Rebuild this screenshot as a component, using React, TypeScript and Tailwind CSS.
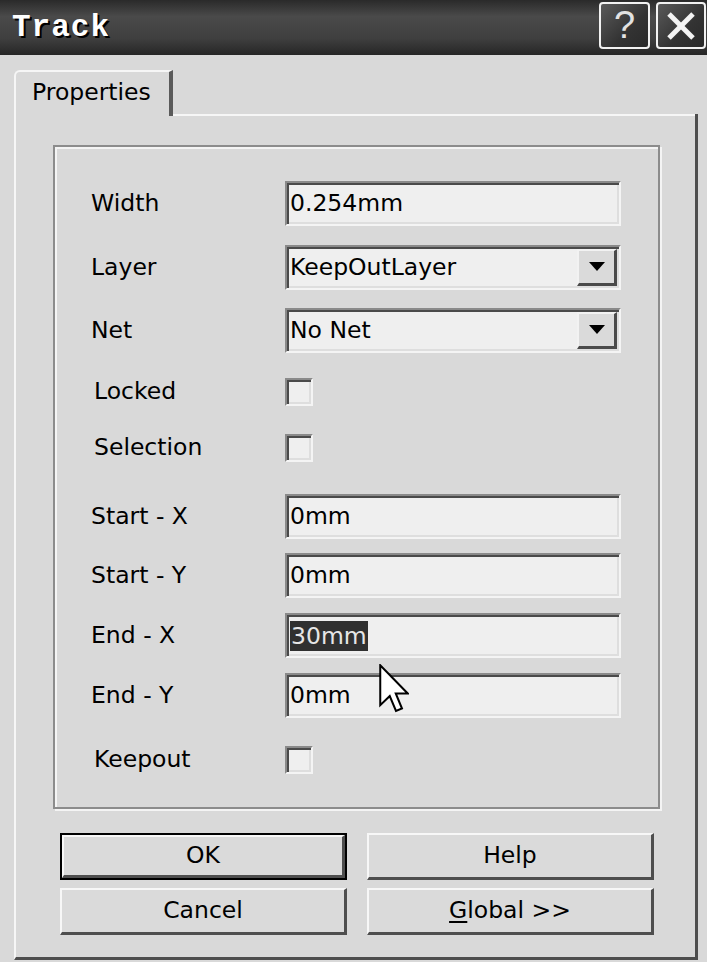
import React from "react";

const sunken =
  "border-2 border-t-[#8a8a8a] border-l-[#8a8a8a] border-b-[#f4f4f4] border-r-[#f4f4f4] shadow-[inset_2px_2px_0_#4a4a4a,inset_-2px_-2px_0_#dedede] bg-[#efefef]";

function Field({ value, combo, selected }: { value: string; combo?: boolean; selected?: boolean }) {
  return (
    <div className={`relative h-[45px] w-[336px] ${sunken} flex items-center pl-[3px]`}>
      {selected ? (
        <span className="bg-[#303030] text-[#e6e6e6] px-[1px] leading-[30px]">{value}</span>
      ) : (
        <span className="text-black">{value}</span>
      )}
      {combo && (
        <div className="absolute right-[2px] top-[2px] bottom-[2px] w-[40px] bg-[#dadada] border-t-2 border-l-2 border-t-[#f2f2f2] border-l-[#f2f2f2] border-b-[3px] border-r-[3px] border-b-[#4a4a4a] border-r-[#4a4a4a] flex items-center justify-center">
          <svg width="16" height="10" viewBox="0 0 16 10">
            <polygon points="0,0 16,0 8,9" fill="#000" />
          </svg>
        </div>
      )}
    </div>
  );
}

function Check() {
  return <div className={`h-[28px] w-[28px] ${sunken}`} />;
}

function Row({ label, children, cls, check }: { label: string; children: React.ReactNode; cls: string; check?: boolean }) {
  return (
    <div className={`flex items-center ${check ? "h-[28px]" : "h-[45px]"} ${cls}`}>
      <div className={`w-[194px] leading-none ${check ? "pl-[3px]" : ""}`}>{label}</div>
      {children}
    </div>
  );
}

function Btn({ children, def }: { children: React.ReactNode; def?: boolean }) {
  const inner =
    "h-full w-full bg-[#dadada] border-t-2 border-l-2 border-t-[#f7f7f7] border-l-[#f7f7f7] border-b-[3px] border-r-[3px] border-b-[#4e4e4e] border-r-[#4e4e4e] flex items-center justify-center";
  return (
    <div className={`w-[287px] ${def ? "h-[47px] border-2 border-black" : "h-[47px]"}`}>
      <div className={inner}>{children}</div>
    </div>
  );
}

export default function App() {
  return (
    <div className="relative w-[707px] h-[962px] overflow-hidden bg-[#d9d9d9] text-[23.5px] text-black font-['DejaVu_Sans','Liberation_Sans',sans-serif]">
      {/* Title bar */}
      <div className="h-[55px] flex items-center justify-between bg-[linear-gradient(to_bottom,#2a2a2a,#4a4a4a_30%,#3f3f3f_70%,#262626)]">
        <div className="pl-[12px] pt-[2px] text-[31px] font-bold text-white tracking-[1px] font-['Liberation_Mono',monospace] [text-shadow:2px_2px_0_#000]">
          Track
        </div>
        <div className="flex items-center gap-[6px] pr-[1px] self-start pt-[2px]">
          <div className="w-[51px] h-[47px] rounded-[4px] border-2 border-[#f2f2f2] bg-[linear-gradient(135deg,#5a5a5a,#333_60%,#2a2a2a)] flex items-center justify-center">
            <span className="text-[38px] leading-none text-[#e2e2e2] font-['Liberation_Sans',sans-serif] pb-[2px]">?</span>
          </div>
          <div className="w-[50px] h-[47px] rounded-[4px] border-2 border-[#f2f2f2] bg-[linear-gradient(135deg,#5a5a5a,#333_60%,#2a2a2a)] flex items-center justify-center">
            <svg width="28" height="28" viewBox="0 0 28 28">
              <line x1="2" y1="2" x2="26" y2="26" stroke="#f4f4f4" strokeWidth="5" />
              <line x1="26" y1="2" x2="2" y2="26" stroke="#f4f4f4" strokeWidth="5" />
            </svg>
          </div>
        </div>
      </div>

      {/* Tab row */}
      <div className="mt-[15px] ml-[14px] mr-[9px] flex items-end">
        <div className="w-[159px] h-[46px] rounded-tl-[6px] border-t-2 border-l-2 border-t-[#f6f6f6] border-l-[#f6f6f6] border-r-[4px] border-r-[#5a5a5a] flex items-center pl-[16px] pb-[2px]">
          Properties
        </div>
        <div className="flex-1 h-[2px] bg-[#f6f6f6] relative">
          <div className="absolute right-0 top-0 w-[3px] h-[2px] bg-[#4e4e4e]" />
        </div>
      </div>

      {/* Panel */}
      <div className="ml-[14px] mr-[9px] h-[844px] pt-[29px] border-l-2 border-l-[#f6f6f6] border-r-[3px] border-r-[#4e4e4e] border-b-[3px] border-b-[#4e4e4e]">
        {/* Group box */}
        <div className="ml-[37px] w-[607px] h-[664px] border-2 border-[#8c8c8c] shadow-[inset_2px_2px_0_#f4f4f4,2px_2px_0_#f4f4f4] pl-[36px] pt-[34px]">
          <Row label="Width" cls="">
            <Field value="0.254mm" />
          </Row>
          <Row label="Layer" cls="mt-[19px]">
            <Field value="KeepOutLayer" combo />
          </Row>
          <Row label="Net" cls="mt-[18px]">
            <Field value="No Net" combo />
          </Row>
          <Row label="Locked" cls="mt-[25px]" check>
            <Check />
          </Row>
          <Row label="Selection" cls="mt-[28px]" check>
            <Check />
          </Row>
          <Row label="Start - X" cls="mt-[32px]">
            <Field value="0mm" />
          </Row>
          <Row label="Start - Y" cls="mt-[14px]">
            <Field value="0mm" />
          </Row>
          <Row label="End - X" cls="mt-[15px]">
            <Field value="30mm" selected />
          </Row>
          <Row label="End - Y" cls="mt-[15px]">
            <Field value="0mm" />
          </Row>
          <Row label="Keepout" cls="mt-[28px]" check>
            <Check />
          </Row>
        </div>

        {/* Buttons */}
        <div className="ml-[44px] mt-[24px] grid grid-cols-[287px_287px] gap-x-[20px] gap-y-[8px]">
          <Btn def>OK</Btn>
          <Btn>Help</Btn>
          <Btn>Cancel</Btn>
          <Btn>
            <span>
              <span className="underline underline-offset-[3px]">G</span>lobal &gt;&gt;
            </span>
          </Btn>
        </div>
      </div>

      {/* Mouse cursor */}
      <svg className="absolute left-[379px] top-[664px]" width="30" height="50" viewBox="0 0 12 20">
        <path d="M0.5,0.5 L0.5,16.5 L4.3,12.8 L6.8,18.8 L9.2,17.8 L6.7,11.8 L11.5,11.8 Z" fill="#fff" stroke="#000" strokeWidth="0.8" strokeLinejoin="miter" />
      </svg>
    </div>
  );
}
